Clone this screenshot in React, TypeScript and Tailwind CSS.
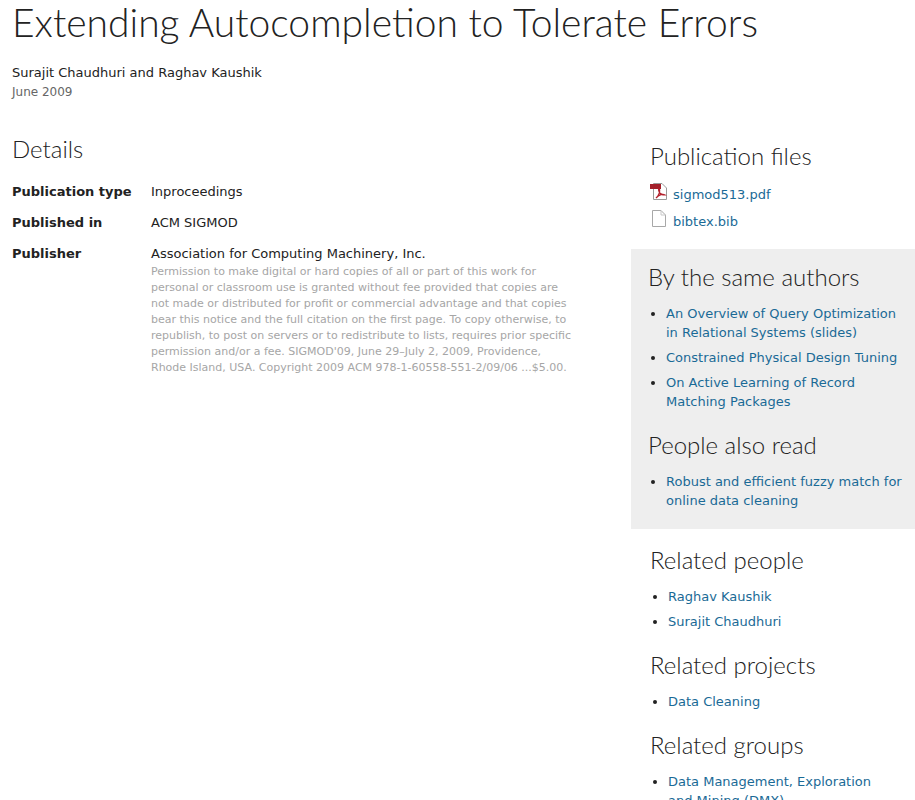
const headingFont = "font-['Lato',sans-serif] font-light text-[#222]";

function SectionHeading({ children, className = '' }: { children: React.ReactNode; className?: string }) {
  return <h2 className={`${headingFont} text-[24px] leading-[32px] ${className}`}>{children}</h2>;
}

function LinkList({ items, className = '' }: { items: string[]; className?: string }) {
  return (
    <ul className={`list-disc pl-[18px] ${className}`}>
      {items.map((item) => (
        <li key={item} className="mb-[6px] leading-[19px] text-[#222]">
          <a href="#" className="text-[#1a6a96]">{item}</a>
        </li>
      ))}
    </ul>
  );
}

function PdfIcon() {
  return (
    <svg width="17" height="18" viewBox="0 0 17 18" className="shrink-0">
      <path d="M3.5 .5H12L16.5 5V16.5H3.5Z" fill="#fff" stroke="#9a9a9a" />
      <rect x="0" y="1" width="11" height="5" fill="#a3202a" />
      <path d="M6 15C9 12 10 8 9.500 6C9 4.500 8 6 9 8.500C10 11 12 12 15 12C13 10.500 9 11.500 6 15Z" fill="none" stroke="#b3202c" strokeWidth="1.200" />
    </svg>
  );
}

function FileIcon() {
  return (
    <svg width="17" height="18" viewBox="0 0 17 18" className="shrink-0">
      <path d="M2.500 .5H11L15.500 5V16.500H2.500Z" fill="#fff" stroke="#a8a8a8" />
      <path d="M11 .5V5H15.500" fill="none" stroke="#c8c8c8" />
    </svg>
  );
}

const permission =
  "Permission to make digital or hard copies of all or part of this work for personal or classroom use is granted without fee provided that copies are not made or distributed for profit or commercial advantage and that copies bear this notice and the full citation on the first page. To copy otherwise, to republish, to post on servers or to redistribute to lists, requires prior specific permission and/or a fee. SIGMOD'09, June 29–July 2, 2009, Providence, Rhode Island, USA. Copyright 2009 ACM 978-1-60558-551-2/09/06 ...$5.00.";

export default function App() {
  return (
    <div className="h-[800px] overflow-hidden bg-white font-['DejaVu_Sans',sans-serif] text-[13px] text-[#222]">
      <h1 className={`${headingFont} pl-[12px] text-[39px] leading-[44px] whitespace-nowrap`}>
        Extending Autocompletion to Tolerate Errors
      </h1>
      <div className="pl-[12px] pt-[19px] leading-[19px]">
        <p>Surajit Chaudhuri and Raghav Kaushik</p>
        <p className="text-[12px] leading-[20px] text-[#666]">June 2009</p>
      </div>

      <div className="flex items-start">
        <main className="w-[631px] shrink-0 pl-[12px] pt-[31px]">
          <SectionHeading>Details</SectionHeading>
          <dl className="mt-[17px] grid grid-cols-[139px_420px] gap-y-[12px] leading-[19px]">
            <dt className="font-bold">Publication type</dt>
            <dd>Inproceedings</dd>
            <dt className="font-bold">Published in</dt>
            <dd>ACM SIGMOD</dd>
            <dt className="font-bold">Publisher</dt>
            <dd>
              Association for Computing Machinery, Inc.
              <p className="mt-[1px] text-[11px] leading-[16px] text-[#a6a6a6]">{permission}</p>
            </dd>
          </dl>
        </main>

        <aside className="min-w-0 flex-1 pt-[38px]">
          <div className="pl-[19px]">
            <SectionHeading>Publication files</SectionHeading>
            <div className="mt-[11px] flex flex-col gap-[9px]">
              <a href="#" className="flex h-[18px] items-start gap-[6px] text-[#1a6a96]">
                <PdfIcon />
                <span className="mt-[2px]">sigmod513.pdf</span>
              </a>
              <a href="#" className="flex h-[18px] items-start gap-[6px] text-[#1a6a96]">
                <FileIcon />
                <span className="mt-[2px]">bibtex.bib</span>
              </a>
            </div>
          </div>

          <div className="mt-[21px] bg-[#eeeeee] pb-[13px] pl-[17px] pr-[8px] pt-[12px]">
            <SectionHeading>By the same authors</SectionHeading>
            <LinkList
              className="mt-[11px]"
              items={[
                'An Overview of Query Optimization in Relational Systems (slides)',
                'Constrained Physical Design Tuning',
                'On Active Learning of Record Matching Packages',
              ]}
            />
            <SectionHeading className="mt-[18px]">People also read</SectionHeading>
            <LinkList className="mt-[11px]" items={['Robust and efficient fuzzy match for online data cleaning']} />
          </div>

          <div className="pl-[19px] pr-[20px] pt-[15px]">
            <SectionHeading>Related people</SectionHeading>
            <LinkList className="mt-[11px]" items={['Raghav Kaushik', 'Surajit Chaudhuri']} />
            <SectionHeading className="mt-[18px]">Related projects</SectionHeading>
            <LinkList className="mt-[11px]" items={['Data Cleaning']} />
            <SectionHeading className="mt-[18px]">Related groups</SectionHeading>
            <LinkList className="mt-[11px]" items={['Data Management, Exploration and Mining (DMX)']} />
          </div>
        </aside>
      </div>
    </div>
  );
}
